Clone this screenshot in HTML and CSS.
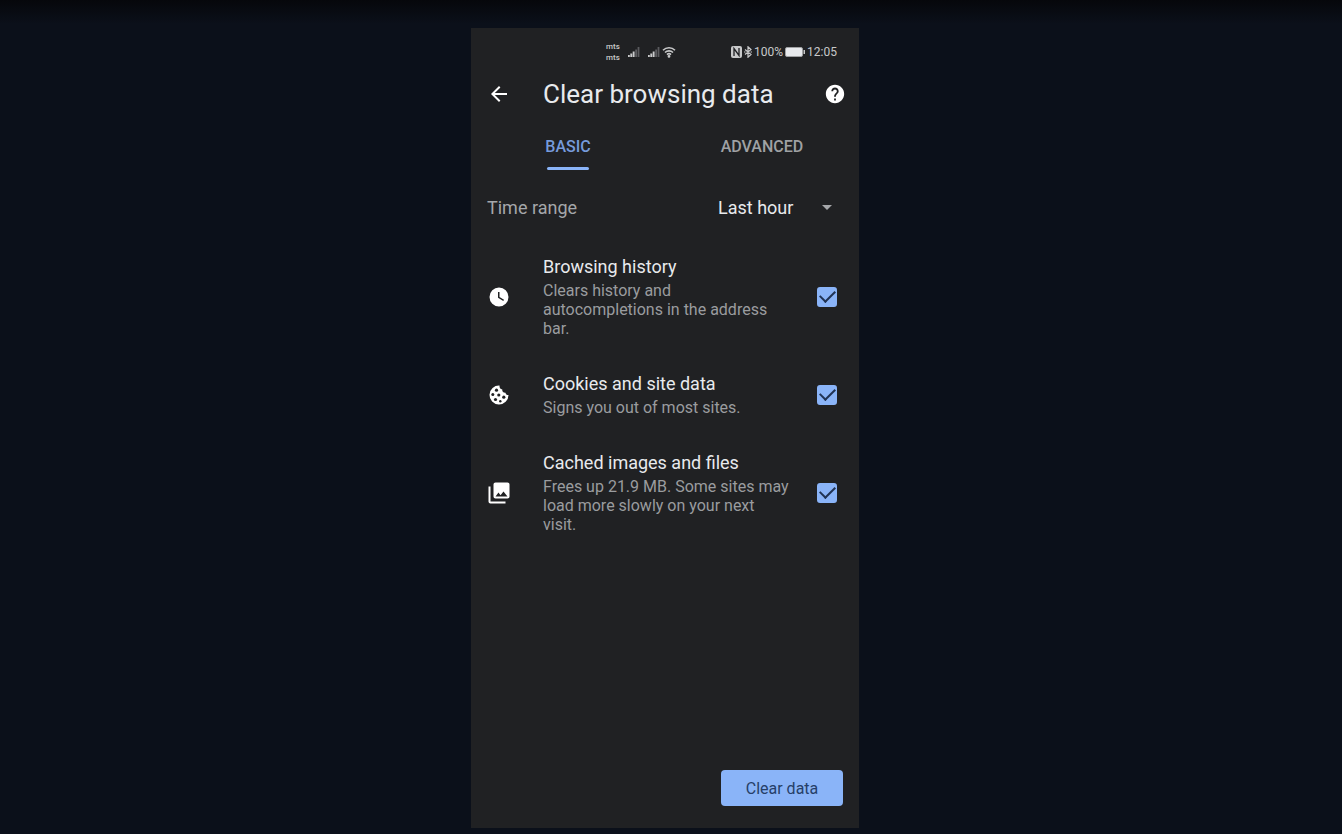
FILE: index.html
```html
<!DOCTYPE html>
<html lang="en">
<head>
    <meta charset="UTF-8">
    <meta name="viewport" content="width=device-width, initial-scale=1.0">
    <title>Clear browsing data</title>
    <link rel="stylesheet" href="styles.css">
</head>
<body>
<main class="phone">

    <!-- Status bar -->
    <div class="status-bar">
        <div class="status-network">
            <div class="carriers"><span>mts</span><span>mts</span></div>
            <svg class="signal" viewBox="0 0 12 12"><path fill="#c8c9ca" d="M0 9h1.8v2H0zM2.300 7.600H4.200V11H2.300zM4.700 5.600h1.900V11H4.700z"/><path fill="#5a5b5e" d="M7.200 3.400h1.800V11H7.200zM9.600 1h1.800v10H9.600z"/></svg>
            <svg class="signal second" viewBox="0 0 12 12"><path fill="#c8c9ca" d="M0 9h1.8v2H0zM2.300 7.600H4.200V11H2.300zM4.700 5.600h1.900V11H4.700z"/><path fill="#5a5b5e" d="M7.200 3.400h1.800V11H7.200zM9.600 1h1.800v10H9.600z"/></svg>
            <svg class="wifi" viewBox="0 0 14 12" fill="none" stroke="#c8c9ca" stroke-width="1.6"><path d="M1 4.2a8.6 8.6 0 0 1 12 0M3 6.5a5.7 5.7 0 0 1 8 0M5 8.6a2.9 2.9 0 0 1 4 0"/><circle cx="7" cy="10.4" r=".6" fill="#c8c9ca"/></svg>
        </div>
        <div class="status-system">
            <svg class="nfc" viewBox="0 0 11 12"><rect width="11" height="12" rx="2" fill="#c8c9ca"/><path d="M3 10V2.5l5 7V2" fill="none" stroke="#202124" stroke-width="1.3"/></svg>
            <svg class="bluetooth" viewBox="0 0 8 12" fill="none" stroke="#c8c9ca" stroke-width="1.2"><path d="M1 3.5l6 5-3 2.700V.8l3 2.700-6 5M0 6h1.500M6.500 6H8"/></svg>
            <span>100%</span>
            <svg class="battery" viewBox="0 0 20 10"><rect x=".5" y=".5" width="17" height="9" rx="1.5" fill="#e8eaed" stroke="#a0a1a3"/><path fill="#c8c9ca" d="M18.500 3H20v4h-1.500z"/></svg>
            <span>12:05</span>
        </div>
    </div>

    <header class="header">
        <button class="icon-btn" type="button" aria-label="Back">
            <svg class="icon" viewBox="0 0 24 24"><path d="M20 11H7.83l5.59-5.59L12 4l-8 8 8 8 1.41-1.41L7.83 13H20v-2z"/></svg>
        </button>
        <h1>Clear browsing data</h1>
        <button class="icon-btn help" type="button" aria-label="Help">
            <svg class="icon" viewBox="0 0 24 24"><path d="M12 2C6.48 2 2 6.48 2 12s4.48 10 10 10 10-4.48 10-10S17.52 2 12 2zm1 17h-2v-2h2v2zm2.07-7.75l-.9.92C13.45 12.9 13 13.5 13 15h-2v-.5c0-1.1.45-2.1 1.17-2.83l1.24-1.26c.37-.36.59-.86.59-1.41 0-1.1-.9-2-2-2s-2 .9-2 2H8c0-2.21 1.79-4 4-4s4 1.79 4 4c0 .88-.36 1.68-.93 2.25z"/></svg>
        </button>
    </header>

    <nav class="tabs">
        <button class="tab active" type="button">BASIC</button>
        <button class="tab" type="button">ADVANCED</button>
    </nav>

    <div class="time-range">
        <label for="range">Time range</label>
        <div class="select-wrap">
            <select id="range">
                <option>Last hour</option>
                <option>Last 24 hours</option>
                <option>Last 7 days</option>
                <option>Last 4 weeks</option>
                <option>All time</option>
            </select>
            <svg class="arrow" viewBox="0 0 10 5"><path d="M0 0h10L5 5z"/></svg>
        </div>
    </div>

    <!-- Data types -->
    <div class="list">
        <label class="item">
            <svg class="icon" viewBox="0 0 24 24"><path d="M12 2.500a9.500 9.500 0 1 0 0 19 9.500 9.500 0 0 0 0-19zm4.300 13.500L11 12.800V7h1.500v5l4.500 2.700z"/></svg>
            <span class="item-info">
                <span class="item-title">Browsing history</span>
                <span class="item-text">Clears history and autocompletions in the address bar.</span>
            </span>
            <input type="checkbox" checked>
        </label>
        <label class="item">
            <svg class="icon" viewBox="0 0 24 24"><path d="M12.500 2.500a9.500 9.500 0 1 0 9 9.500c-1.600.1-2.800-.8-3-2.300-2.200.2-3.600-1.200-3.200-3.200-2-.2-3-2-2.800-4z"/><g fill="#202123"><circle cx="9.500" cy="7.200" r="1.600"/><circle cx="5.800" cy="11.500" r="1.500"/><circle cx="11.800" cy="12" r="1.600"/><circle cx="8.500" cy="16.500" r="1.600"/><circle cx="16.800" cy="14.200" r="1.600"/><circle cx="13.300" cy="18.200" r="1.200"/></g></svg>
            <span class="item-info">
                <span class="item-title">Cookies and site data</span>
                <span class="item-text">Signs you out of most sites.</span>
            </span>
            <input type="checkbox" checked>
        </label>
        <label class="item">
            <svg class="icon" viewBox="0 0 24 24"><path d="M22.500 15.500v-12c0-1.100-.9-2-2-2h-12c-1.100 0-2 .9-2 2v12c0 1.100.9 2 2 2h12c1.100 0 2-.9 2-2zM11.500 11.500l2 2.700 3-3.700 4 5H8.500zM1.500 5.500v15c0 1.100.9 2 2 2h15v-2h-15v-15z"/></svg>
            <span class="item-info">
                <span class="item-title">Cached images and files</span>
                <span class="item-text">Frees up 21.9 MB. Some sites may load more slowly on your next visit.</span>
            </span>
            <input type="checkbox" checked>
        </label>
    </div>

    <footer class="footer">
        <button class="clear-btn" type="button">Clear data</button>
    </footer>
</main>
</body>
</html>
```

FILE: styles.css
```css
* {
    box-sizing: border-box;
}
body {
    display: flex;
    justify-content: center;
    min-height: 100vh;
    margin: 0;
    padding: 28px 12px 6px 0;
    background: linear-gradient(#06070b, #0b101a 24px);
    font-family: Roboto, sans-serif;
    color: #e8eaed;
}
button {
    border: 0;
    padding: 0;
    background: none;
    color: inherit;
    font-family: inherit;
    cursor: pointer;
}
.phone {
    display: flex;
    flex-direction: column;
    width: 100%;
    max-width: 388px;
    background: #202123;
}
.icon {
    display: block;
    width: 24px;
    height: 24px;
    fill: #fff;
}

/* status bar */
.status-bar {
    display: flex;
    justify-content: space-between;
    align-items: center;
    height: 46px;
    padding: 1px 22px 0 135px;
    font-size: 12px;
    color: #c8c9ca;
}
.status-network,
.status-system {
    display: flex;
    align-items: center;
}
.carriers {
    display: flex;
    flex-direction: column;
    width: 22px;
    font-size: 8px;
    font-weight: 500;
    line-height: 11px;
}
.signal {
    width: 12px;
    height: 12px;
}
.second {
    margin-left: 8px;
}
.wifi {
    width: 14px;
    height: 12px;
    margin-left: 2px;
}
.nfc {
    width: 11px;
    height: 12px;
    margin-right: 2px;
}
.bluetooth {
    width: 8px;
    height: 12px;
    margin-right: 2px;
}
.battery {
    width: 20px;
    height: 10px;
    margin: 0 2px;
}

/* header */
.header {
    display: flex;
    align-items: center;
    height: 40px;
    padding: 0 13px 0 16px;
}
.header h1 {
    flex: 1;
    margin: 0 0 0 32px;
    font-size: 26px;
    font-weight: 400;
    line-height: 40px;
}
.help .icon {
    width: 22px;
    height: 22px;
}

.tabs {
    display: flex;
}
.tab {
    flex: 1;
    padding-top: 23px;
    font-size: 16px;
    font-weight: 500;
    line-height: 20px;
    color: #9fa1a4;
}
.tab::after {
    content: "";
    display: block;
    width: 42px;
    height: 3px;
    margin: 10px auto 0;
    border-radius: 2px;
}
.tab.active {
    color: #769bdb;
}
.tab.active::after {
    background: #8ab4f8;
}

.time-range {
    display: flex;
    justify-content: space-between;
    align-items: center;
    height: 40px;
    margin-top: 17px;
    padding: 0 24px 0 16px;
    font-size: 18px;
    color: #a5a7aa;
}
.select-wrap {
    position: relative;
}
.select-wrap select {
    width: 117px;
    height: 32px;
    padding: 0;
    border: 0;
    appearance: none;
    background: none;
    color: #e8eaed;
    font-family: inherit;
    font-size: 18px;
}
.arrow {
    position: absolute;
    top: 14px;
    right: 3px;
    width: 10px;
    height: 5px;
    fill: #a5a7aa;
    pointer-events: none;
}

/* list */
.list {
    display: flex;
    flex-direction: column;
    gap: 34px;
    margin-top: 28px;
    padding: 0 22px 0 16px;
}
.item {
    display: flex;
    align-items: center;
}
.item-info {
    flex: 1;
    margin: 0 26px 0 32px;
}
.item-title,
.item-text {
    display: block;
}
.item-title {
    margin-bottom: 2px;
    font-size: 18px;
    line-height: 24px;
}
.item-text {
    font-size: 16px;
    line-height: 19px;
    color: #9a9c9f;
}
.item input {
    display: grid;
    place-items: center;
    width: 20px;
    height: 20px;
    margin: 0;
    border-radius: 3px;
    appearance: none;
    border: 2px solid #8ab4f8;
}
.item input:checked {
    background: #8ab4f8;
}
.item input:checked::before {
    content: "";
    width: 13px;
    height: 7px;
    border: solid #203354;
    border-width: 0 0 2px 2px;
    transform: translateY(-2px) rotate(-45deg);
}

.footer {
    display: flex;
    justify-content: flex-end;
    margin-top: auto;
    padding: 24px 16px 22px;
}
.clear-btn {
    width: 122px;
    height: 36px;
    border-radius: 4px;
    background: #8ab4f8;
    color: #263f68;
    font-size: 16px;
}
```
